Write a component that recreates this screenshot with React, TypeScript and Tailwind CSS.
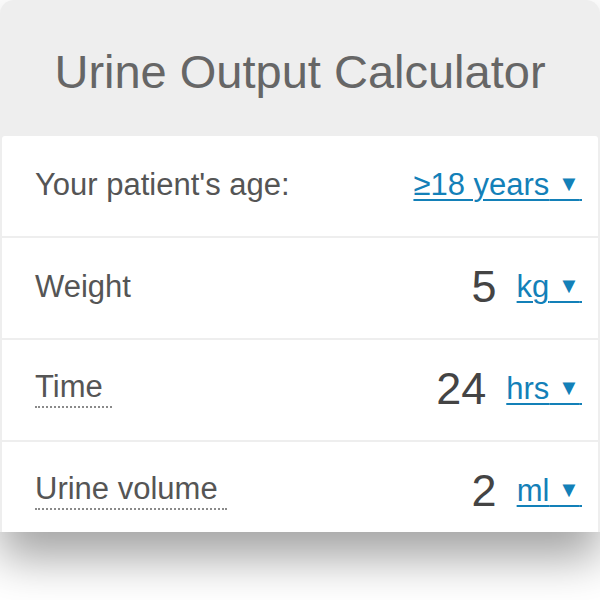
const FONT = { fontFamily: '"Liberation Sans", Arial, sans-serif' };

type Row = {
  label: string;
  dotted?: boolean;
  value?: string;
  unit: string;
};

const ROWS: Row[] = [
  { label: "Your patient's age:", unit: '≥18 years' },
  { label: 'Weight', value: '5', unit: 'kg' },
  { label: 'Time', dotted: true, value: '24', unit: 'hrs' },
  { label: 'Urine volume', dotted: true, value: '2', unit: 'ml' },
];

function UnitSelect({ unit }: { unit: string }) {
  return (
    <span className="text-[31px] leading-none text-[#1380b8] underline decoration-2 underline-offset-[4px] cursor-pointer whitespace-nowrap">
      {unit}
      {'\u00a0'}
      <span className="relative -top-[4px] text-[22px]">▼</span>
      <span className="text-[8px]">{'\u00a0'}</span>
    </span>
  );
}

export default function App() {
  return (
    <div className="min-h-[600px] bg-white" style={FONT}>
      <div className="h-[532px] w-[600px] overflow-hidden rounded-t-[14px] bg-[#eeeeee] shadow-[0_26px_46px_rgba(0,0,0,0.36)] flex flex-col">
        <div className="h-[136px] shrink-0 flex items-center justify-center">
          <h1 className="mt-[7px] text-[47px] leading-none text-[#666666] font-normal">Urine Output Calculator</h1>
        </div>
        <div className="flex flex-col gap-[2px] px-[2px]">
          {ROWS.map((r, i) => (
            <div
              key={r.label}
              className={`flex h-[100px] shrink-0 items-center justify-between bg-white pl-[33px] pr-[16px] pb-[4px] ${i === 0 ? 'rounded-t-[3px]' : ''}`}
            >
              <span
                className={`text-[31px] leading-none text-[#555555] ${r.dotted ? 'border-b-2 border-dotted border-[#8a8a8a] pb-[4px] pr-[9px] -mb-[2px]' : ''}`}
              >
                {r.label}
              </span>
              <div className="flex items-center gap-[20px]">
                {r.value && <span className="text-[45px] leading-none text-[#444444]">{r.value}</span>}
                <UnitSelect unit={r.unit} />
              </div>
            </div>
          ))}
        </div>
      </div>
    </div>
  );
}
